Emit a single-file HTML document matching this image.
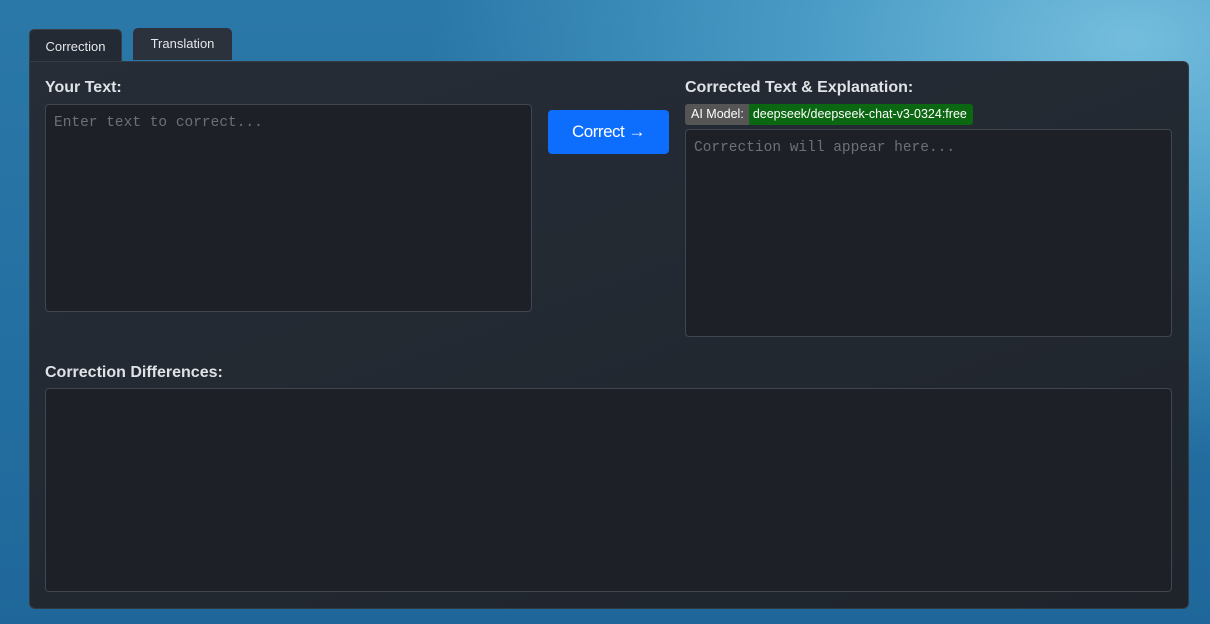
<!DOCTYPE html>
<html><head><meta charset="utf-8"><style>
*{box-sizing:border-box;margin:0;padding:0}
body{width:1210px;height:624px;overflow:hidden;font-family:"Liberation Sans",sans-serif;
background:radial-gradient(ellipse 700px 420px at 1130px 40px,#74bddd 0%,#4a9cc6 45%,rgba(40,120,170,0) 100%),linear-gradient(180deg,#2a78a8 0%,#2470a2 50%,#1f679a 100%);position:relative}
.tab{position:absolute;top:29px;height:33px;border-radius:5px 5px 0 0;font-size:13px;color:#e4e6ea;text-align:center}
.t1{left:29px;width:93px;background:#242a33;line-height:33px;border:1px solid #3a4048;border-bottom:none}
.t2{left:133px;width:99px;top:28px;height:32px;background:#2b323c;line-height:32px}
.panel{position:absolute;left:29px;top:61px;width:1160px;height:548px;border-radius:0 6px 6px 6px;background:linear-gradient(160deg,#262d37 0%,#222830 60%,#1f242b 100%);border:1px solid #353b44}
.lbl{position:absolute;font-weight:bold;font-size:16px;color:#dfe2e6}
.ta{position:absolute;background:#1d2027;border:1px solid #41464e;border-radius:4px;font-family:"Liberation Mono",monospace;font-size:14.5px;color:#6c7077;padding:10px 8px}
.btn{position:absolute;left:518px;top:48px;width:121px;height:44px;background:#0d6efd;border-radius:4px;color:#fff;font-size:17px;text-align:center;line-height:44px;letter-spacing:-0.5px}
.badge{position:absolute;left:655px;top:42px;height:21px;display:flex;font-size:12.5px;border-radius:3px;overflow:hidden}
.b1{background:#555;color:#fff;padding:0 5px 0 6px;line-height:21px}
.b2{background:#0b6712;color:#fff;padding:0 6px 0 4px;line-height:21px}
</style></head><body>
<div class="tab t1">Correction</div>
<div class="tab t2">Translation</div>
<div class="panel">
<div class="lbl" style="left:15px;top:17px">Your Text:</div>
<div class="ta" style="left:15px;top:42px;width:487px;height:208px">Enter text to correct...</div>
<div class="btn">Correct →</div>
<div class="lbl" style="left:655px;top:17px">Corrected Text &amp; Explanation:</div>
<div class="badge"><span class="b1">AI Model:</span><span class="b2">deepseek/deepseek-chat-v3-0324:free</span></div>
<div class="ta" style="left:655px;top:67px;width:487px;height:208px">Correction will appear here...</div>
<div class="lbl" style="left:15px;top:302px">Correction Differences:</div>
<div class="ta" style="left:15px;top:326px;width:1127px;height:204px"></div>
</div>
</body></html>
